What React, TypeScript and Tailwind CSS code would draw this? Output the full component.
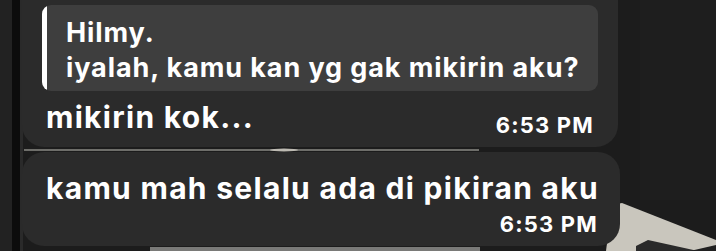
import React from 'react'

const font = { fontFamily: 'Inter, "Noto Sans", sans-serif' }

function Backdrop() {
  // photo-ish background bits: phone edge, glare lines, the pale shape bottom right
  return (
    <svg className="absolute inset-0" width="716" height="251" viewBox="0 0 716 251">
      <rect x="0" y="0" width="716" height="251" fill="#1c1c1c" />
      <rect x="0" y="0" width="12" height="251" fill="#222222" />
      <rect x="12" y="0" width="8" height="251" fill="#0c0c0c" />
      <rect x="20" y="0" width="3" height="251" fill="#2a2a2a" />
      <rect x="640" y="0" width="76" height="200" fill="#1e1e1e" />
      <rect x="24" y="149" width="455" height="2" fill="#6e6e6a" />
      <ellipse cx="284" cy="150" rx="14" ry="1.5" fill="#bdbab2" />
      <rect x="150" y="247" width="330" height="4" fill="#7a7a78" />
      <polygon points="612,205 622,203 716,240 716,251 606,251" fill="#c9c6bd" />
      <polygon points="636,246 648,240 698,251 636,251" fill="#2a2a2a" />
      <polygon points="690,251 716,245 716,251" fill="#202020" />
    </svg>
  )
}

export default function App() {
  return (
    <div className="relative w-[716px] h-[251px] overflow-hidden bg-[#1c1c1c]" style={font}>
      <Backdrop />
      <div className="relative flex flex-col pl-[22px]">
        <div className="w-[596px] h-[147px] rounded-b-[22px] bg-[#2b2b2b] px-[20px] pt-[5px]">
          <div className="flex h-[86px] rounded-[9px] bg-[#3e3e3e] overflow-hidden">
            <div className="w-[5px] bg-white" />
            <div className="pl-[19px] pt-[10px] text-[27px] leading-[35px] font-bold tracking-[0.9px] text-white whitespace-nowrap">
              <div>Hilmy.</div>
              <div>iyalah, kamu kan yg gak mikirin aku?</div>
            </div>
          </div>
          <div className="flex items-start justify-between pl-[4px] pr-[4px] mt-[10px]">
            <div className="text-[30px] leading-[32px] font-bold tracking-[1.3px] text-white">mikirin kok...</div>
            <div className="mt-[12px] text-[22px] leading-[24px] font-bold tracking-[1.2px] text-white">6:53 PM</div>
          </div>
        </div>
        <div className="mt-[5px] w-[598px] h-[94px] rounded-[22px] bg-[#2b2b2b] pl-[24px] pr-[22px] pt-[20px]">
          <div className="text-[30px] leading-[32px] font-bold tracking-[1.3px] text-white whitespace-nowrap">kamu mah selalu ada di pikiran aku</div>
          <div className="mt-[8px] text-right text-[22px] leading-[24px] font-bold tracking-[1.2px] text-white">6:53 PM</div>
        </div>
      </div>
    </div>
  )
}
